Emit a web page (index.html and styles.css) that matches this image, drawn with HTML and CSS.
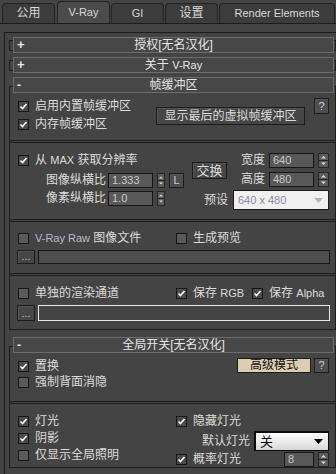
FILE: index.html
```html
<!DOCTYPE html>
<html lang="zh-CN">
<head>
    <meta charset="UTF-8">
    <title>V-Ray 渲染设置</title>
    <link rel="stylesheet" href="styles.css">
</head>
<body>
    <div class="tabs">
        <div class="tab">公用</div>
        <div class="tab sel"><span class="en">V-Ray</span></div>
        <div class="tab"><span class="en">GI</span></div>
        <div class="tab">设置</div>
        <div class="tab wide"><span class="en">Render Elements</span></div>
    </div>

    <div class="panel">
        <!-- 折叠的卷展栏 -->
        <div class="rollout closed first">
            <div class="roll-head"><span class="sign">+</span><span class="title">授权[无名汉化]</span></div>
        </div>
        <div class="rollout closed">
            <div class="roll-head"><span class="sign">+</span><span class="title">关于 <span class="en">V-Ray</span></span></div>
        </div>

        <!-- 帧缓冲区 -->
        <div class="rollout open">
            <div class="roll-head"><span class="sign minus">-</span><span class="title">帧缓冲区</span></div>

            <div class="g1">
                <div class="col">
                    <div class="chk tall"><span class="cb on"><svg viewBox="0 0 9 9" width="9" height="9"><path d="M1.5 4.5 L3.5 6.5 L7.5 2" fill="none" stroke="#fff" stroke-width="1.6"/></svg></span><span>启用内置帧缓冲区</span></div>
                    <div class="chk tall"><span class="cb on"><svg viewBox="0 0 9 9" width="9" height="9"><path d="M1.5 4.5 L3.5 6.5 L7.5 2" fill="none" stroke="#fff" stroke-width="1.6"/></svg></span><span>内存帧缓冲区</span></div>
                </div>
                <div class="btn vfb">显示最后的虚拟帧缓冲区</div>
                <div class="btn help"><span class="en">?</span></div>
            </div>
            <div class="sep"></div>

            <div class="g2">
                <div class="chk pad r1"><span class="cb on"><svg viewBox="0 0 9 9" width="9" height="9"><path d="M1.5 4.5 L3.5 6.5 L7.5 2" fill="none" stroke="#fff" stroke-width="1.6"/></svg></span><span>从 <span class="en">MAX</span> 获取分辨率</span></div>
                <div class="btn swap">交换</div>
                <div class="field-row r1 c3">
                    <span>宽度</span>
                    <span class="num en">640</span>
                    <svg class="spin" viewBox="0 0 11 15" width="11" height="15"><rect x="0.5" y="0.5" width="10" height="14" fill="#5c5c5c" stroke="#262626"/><path d="M1 7.5 H10" stroke="#262626"/><path d="M3 5.5 L5.5 3 L8 5.5Z" fill="#ddd"/><path d="M3 9.5 L5.5 12 L8 9.5Z" fill="#ddd"/></svg>
                </div>

                <div class="lbl-row r2">
                    <span class="lbl">图像纵横比</span>
                    <span class="num en">1.333</span>
                    <svg class="spin" viewBox="0 0 8 15" width="8" height="15"><rect x="0.5" y="0.5" width="7" height="14" fill="#5c5c5c" stroke="#262626"/><path d="M1 7.5 H7" stroke="#262626"/><path d="M2 5.5 L4 3.5 L6 5.5Z" fill="#ddd"/><path d="M2 9.5 L4 11.5 L6 9.5Z" fill="#ddd"/></svg>
                    <span class="btn lock en">L</span>
                </div>
                <div class="field-row r2 c3">
                    <span>高度</span>
                    <span class="num en">480</span>
                    <svg class="spin" viewBox="0 0 11 15" width="11" height="15"><rect x="0.5" y="0.5" width="10" height="14" fill="#5c5c5c" stroke="#262626"/><path d="M1 7.5 H10" stroke="#262626"/><path d="M3 5.5 L5.5 3 L8 5.5Z" fill="#ddd"/><path d="M3 9.5 L5.5 12 L8 9.5Z" fill="#ddd"/></svg>
                </div>

                <div class="lbl-row r3">
                    <span class="lbl">像素纵横比</span>
                    <span class="num en">1.0</span>
                    <svg class="spin" viewBox="0 0 8 15" width="8" height="15"><rect x="0.5" y="0.5" width="7" height="14" fill="#5c5c5c" stroke="#262626"/><path d="M1 7.5 H7" stroke="#262626"/><path d="M2 5.5 L4 3.5 L6 5.5Z" fill="#ddd"/><path d="M2 9.5 L4 11.5 L6 9.5Z" fill="#ddd"/></svg>
                </div>
                <div class="preset r3">
                    <span>预设</span>
                    <span class="dd dis"><span class="en">640 x 480</span><svg viewBox="0 0 9 5" width="9" height="5"><path d="M0 0 H9 L4.5 5Z" fill="#b4b4b4"/></svg></span>
                </div>
            </div>
            <div class="sep"></div>

            <div class="g3">
                <div class="chk-line">
                    <div class="chk pad"><span class="cb"></span><span><span class="en raw">V-Ray Raw</span> 图像文件</span></div>
                    <div class="chk"><span class="cb"></span><span>生成预览</span></div>
                </div>
                <div class="file-row">
                    <span class="btn dots en">...</span>
                    <span class="path"></span>
                </div>
            </div>
            <div class="sep"></div>

            <div class="g4">
                <div class="chk-line">
                    <div class="chk pad"><span class="cb"></span><span>单独的渲染通道</span></div>
                    <div class="chk"><span class="cb on"><svg viewBox="0 0 9 9" width="9" height="9"><path d="M1.5 4.5 L3.5 6.5 L7.5 2" fill="none" stroke="#fff" stroke-width="1.6"/></svg></span><span>保存 <span class="en">RGB</span></span></div>
                    <div class="chk"><span class="cb on"><svg viewBox="0 0 9 9" width="9" height="9"><path d="M1.5 4.5 L3.5 6.5 L7.5 2" fill="none" stroke="#fff" stroke-width="1.6"/></svg></span><span>保存 <span class="en">Alpha</span></span></div>
                </div>
                <div class="file-row big">
                    <span class="btn dots en">...</span>
                    <span class="path active"></span>
                </div>
            </div>
        </div>

        <!-- 全局开关 -->
        <div class="rollout open">
            <div class="roll-head"><span class="sign minus">-</span><span class="title">全局开关[无名汉化]</span></div>

            <div class="ga">
                <div class="chk pad first-row"><span class="cb on"><svg viewBox="0 0 9 9" width="9" height="9"><path d="M1.5 4.5 L3.5 6.5 L7.5 2" fill="none" stroke="#fff" stroke-width="1.6"/></svg></span><span>置换</span></div>
                <div class="btn expert">高级模式</div>
                <div class="btn help"><span class="en">?</span></div>
                <div class="chk pad"><span class="cb"></span><span>强制背面消隐</span></div>
            </div>
            <div class="sep"></div>

            <div class="gb">
                <div class="left">
                    <div class="chk pad"><span class="cb on"><svg viewBox="0 0 9 9" width="9" height="9"><path d="M1.5 4.5 L3.5 6.5 L7.5 2" fill="none" stroke="#fff" stroke-width="1.6"/></svg></span><span>灯光</span></div>
                    <div class="chk pad"><span class="cb on"><svg viewBox="0 0 9 9" width="9" height="9"><path d="M1.5 4.5 L3.5 6.5 L7.5 2" fill="none" stroke="#fff" stroke-width="1.6"/></svg></span><span>阴影</span></div>
                    <div class="chk pad"><span class="cb"></span><span>仅显示全局照明</span></div>
                </div>
                <div class="right">
                    <div class="chk"><span class="cb on"><svg viewBox="0 0 9 9" width="9" height="9"><path d="M1.5 4.5 L3.5 6.5 L7.5 2" fill="none" stroke="#fff" stroke-width="1.6"/></svg></span><span>隐藏灯光</span></div>
                    <div class="deflight">
                        <span>默认灯光</span>
                        <span class="dd off">关<svg viewBox="0 0 9 5" width="9" height="5"><path d="M0 0 H9 L4.5 5Z" fill="#000"/></svg></span>
                    </div>
                    <div class="prob">
                        <div class="chk"><span class="cb on"><svg viewBox="0 0 9 9" width="9" height="9"><path d="M1.5 4.5 L3.5 6.5 L7.5 2" fill="none" stroke="#fff" stroke-width="1.6"/></svg></span><span>概率灯光</span></div>
                        <span class="num small en">8</span>
                        <svg class="spin" viewBox="0 0 11 15" width="11" height="15"><rect x="0.5" y="0.5" width="10" height="14" fill="#5c5c5c" stroke="#262626"/><path d="M1 7.5 H10" stroke="#262626"/><path d="M3 5.5 L5.5 3 L8 5.5Z" fill="#ddd"/><path d="M3 9.5 L5.5 12 L8 9.5Z" fill="#ddd"/></svg>
                    </div>
                </div>
            </div>
        </div>
    </div>
</body>
</html>
```

FILE: styles.css
```css
* {
    margin: 0;
    padding: 0;
    box-sizing: border-box;
}

body {
    width: 336px;
    height: 474px;
    overflow: hidden;
    background: #444444;
    color: #dcdcdc;
    font-family: "Liberation Sans", "Noto Sans CJK SC", sans-serif;
    font-size: 12px;
    line-height: 15px;
}

.en {
    font-size: 11px;
}

.raw {
    color: #b4bccc;
}

/* 标签页 */
.tabs {
    display: flex;
    align-items: flex-end;
    height: 24px;
    padding-left: 2px;
    gap: 1px;
    border-bottom: 1px solid #1c1c1c;
}

.tab {
    width: 53px;
    height: 20px;
    border: 1px solid #232323;
    border-bottom: none;
    border-radius: 4px 4px 0 0;
    background: #3c3c3c;
    display: flex;
    align-items: center;
    justify-content: center;
    color: #d8d8d8;
}

.tab.sel {
    height: 22px;
    margin-left: 1px;
    background: #4b4b4b;
}

.tab.wide {
    width: 116px;
}

/* 面板 */
.panel {
    margin: 8px 0 0 4px;
    height: 442px;
    border-top: 1px solid #1c1c1c;
    border-left: 1px solid #1c1c1c;
    padding-left: 4px;
}

.rollout {
    border: 1px solid #1e1e1e;
}

.rollout.closed {
    height: 11px;
    margin-top: 9px;
}

.rollout.first {
    margin-top: 7px;
}

.rollout.open {
    margin-top: 15px;
}

.rollout.open + .rollout.open {
    margin-top: 16px;
}

.roll-head {
    height: 16px;
    margin: -4px 1px 0 3px;
    border: 1px solid #6c6c6c;
    background: #474747;
    display: grid;
    grid-template-columns: 18px 1fr 18px;
    align-items: center;
    line-height: 14px;
    color: #e6e6e6;
}

.open > .roll-head {
    margin-top: -10px;
}

.sign {
    padding-left: 3px;
    font-weight: bold;
    font-size: 13px;
}

.sign.minus {
    font-size: 12px;
}

.title {
    text-align: center;
}

.sep {
    height: 3px;
    border-top: 1px solid #1c1c1c;
    border-bottom: 1px solid #1c1c1c;
}

/* 复选框 */
.chk {
    display: flex;
    align-items: center;
    height: 15px;
    gap: 6px;
    white-space: nowrap;
}

.chk.tall {
    height: 18px;
}

.chk.pad {
    padding-left: 8px;
}

.cb {
    width: 11px;
    height: 11px;
    flex: none;
    border: 1px solid #161616;
    background: #5a5a5a;
    display: flex;
}

.cb.on {
    background: #4a4a4a;
}

/* 按钮 / 输入框 */
.btn {
    border: 1px solid #1c1c1c;
    background: #464646;
    box-shadow: inset 1px 1px 0 #555;
    display: flex;
    align-items: center;
    justify-content: center;
    white-space: nowrap;
}

.help {
    width: 15px;
    height: 16px;
    background: #4e4e4e;
    color: #c8ccf0;
}

.num {
    width: 45px;
    height: 15px;
    border: 1px solid #161616;
    background: #585858;
    color: #c4c8d0;
    padding-left: 3px;
    line-height: 13px;
    flex: none;
}

.num.small {
    width: 30px;
    margin-left: auto;
}

.spin {
    display: block;
    flex: none;
}

.dd {
    display: flex;
    align-items: center;
    justify-content: space-between;
    height: 20px;
    padding: 0 5px 0 4px;
    border: 1px solid #1c1c1c;
}

.dd.dis {
    width: 96px;
    background: #f0f0f0;
    color: #8a8a9a;
}

.dd.off {
    width: 75px;
    background: linear-gradient(#ffffff, #d6d6d6);
    color: #000;
    border-color: #0c0c0c;
    border-width: 2px 1px 1px 2px;
    font-size: 13px;
}

/* 帧缓冲区 - 第一组 */
.g1 {
    height: 47px;
    display: flex;
    align-items: flex-start;
    padding: 4px 0 0 8px;
}

.g1 .col {
    width: 138px;
}

.vfb {
    width: 149px;
    height: 18px;
    margin-top: 10px;
}

.g1 .help {
    margin: 1px 0 0 9px;
}

/* 分辨率 */
.g2 {
    height: 76px;
    display: grid;
    grid-template-columns: 182px 35px 1fr;
    grid-template-rows: 19px 18px 20px;
    padding: 10px 6px 0 0;
    align-items: start;
}

.r1 { grid-row: 1; }
.r2 { grid-row: 2; }
.r3 { grid-row: 3; }
.c3 { grid-column: 3; }

.g2 .chk {
    grid-column: 1;
}

.swap {
    grid-column: 2;
    grid-row: 1 / 3;
    margin-top: 9px;
    height: 17px;
    width: 35px;
    font-size: 13px;
}

.field-row {
    display: flex;
    justify-content: flex-end;
    align-items: center;
    gap: 4px;
    height: 15px;
}

.lbl-row {
    grid-column: 1;
    display: flex;
    align-items: center;
    gap: 4px;
    height: 15px;
    margin-top: 1px;
}

.lbl {
    width: 96px;
    margin-right: -2px;
    text-align: right;
}

.lock {
    width: 15px;
    height: 15px;
    background: #4e4e4e;
    color: #c8ccf0;
}

.preset {
    grid-column: 2 / 4;
    display: flex;
    justify-content: flex-end;
    align-items: center;
    gap: 5px;
    height: 20px;
}

/* 文件行 */
.g3 {
    height: 51px;
    padding-top: 9px;
}

.g4 {
    height: 53px;
    padding-top: 10px;
}

.chk-line {
    display: grid;
    grid-template-columns: 166px 76px 1fr;
}

.file-row {
    display: flex;
    gap: 3px;
    margin-top: 4px;
    padding-left: 7px;
    height: 14px;
}

.file-row.big {
    height: 16px;
}

.dots {
    width: 18px;
    height: 100%;
    line-height: 8px;
    align-items: flex-end;
    padding-bottom: 3px;
    color: #b8bce0;
}

.path {
    width: 292px;
    height: 100%;
    border: 1px solid #161616;
    background: #4e4e4e;
}

.path.active {
    border-color: #e6e6e6;
    background: #444;
}

/* 全局开关 */
.ga {
    height: 48px;
    display: grid;
    grid-template-columns: 1fr 74px 18px;
    grid-template-rows: 17px 15px;
    padding: 5px 6px 0 0;
    align-items: start;
}

.ga .first-row {
    margin-top: 1px;
}

.ga .chk:last-child {
    grid-column: 1 / 4;
}

.expert {
    height: 15px;
    background: #dccdb0;
    box-shadow: none;
    color: #111;
}

.ga .help {
    height: 15px;
    margin-left: 3px;
}

.gb {
    display: flex;
    padding-top: 10px;
}

.gb .left {
    width: 166px;
}

.gb .left .chk + .chk {
    margin-top: 2px;
}

.gb .right {
    flex: 1;
    padding-right: 6px;
}

.deflight {
    display: flex;
    justify-content: flex-end;
    align-items: center;
    gap: 4px;
    margin-top: 2px;
}

.prob {
    display: flex;
    align-items: center;
    gap: 4px;
    margin-top: 1px;
}
```
